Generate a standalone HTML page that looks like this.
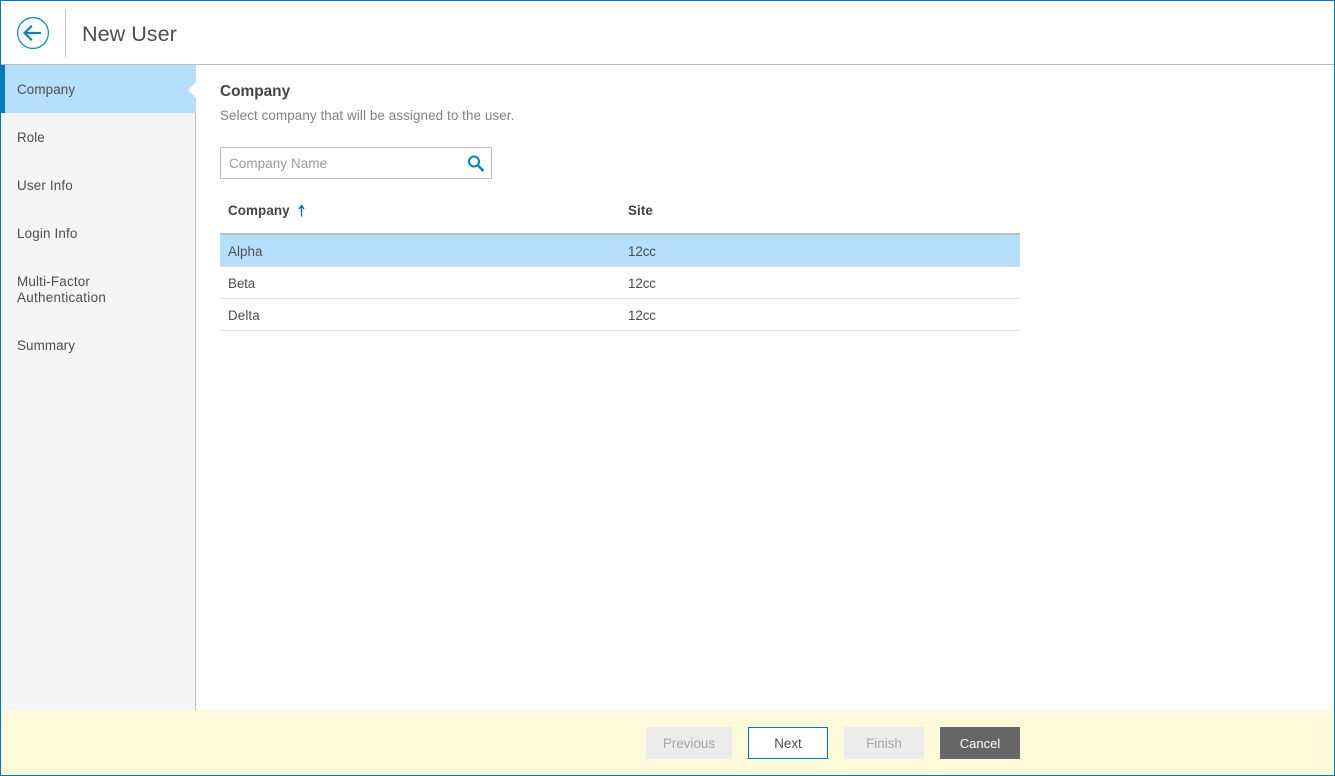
<!DOCTYPE html>
<html>
<head>
<meta charset="utf-8">
<title>New User</title>
<style>
html,body{margin:0;padding:0;background:#fff}
body{width:1335px;height:776px;position:relative;overflow:hidden;font-family:"Liberation Sans",sans-serif;font-size:13.4px;color:#4d4d4d}
.a{position:absolute;white-space:nowrap}
.t{line-height:16px;letter-spacing:.05px}
.b{font-weight:bold;letter-spacing:.1px}
.btn{position:absolute;top:727px;height:32px;line-height:34px;text-align:center;box-sizing:border-box}
</style>
</head>
<body>
<div class="a" style="left:0;top:0;width:1335px;height:776px;box-sizing:border-box;border:1px solid #0079b5;z-index:5"></div>

<!-- header -->
<svg class="a" style="left:16px;top:17px" width="34" height="34" viewBox="0 0 34 34">
<circle cx="17" cy="16" r="15.4" fill="none" stroke="#0a84ba" stroke-width="1.2"/>
<path d="M25 16H8.8M15.8 8.8L8.5 16l7.3 7.2" fill="none" stroke="#0a84ba" stroke-width="2.2"/>
</svg>
<div class="a" style="left:65px;top:9px;width:1px;height:48px;background:#c4c4c4"></div>
<div class="a" style="left:82px;top:21px;font-size:21.6px;line-height:26px;color:#4e4e4e">New User</div>
<div class="a" style="left:1px;top:64px;width:1333px;height:1px;background:#bdbdbd"></div>

<!-- sidebar -->
<div class="a" style="left:1px;top:65px;width:194px;height:646px;background:#f5f5f5"></div>
<div class="a" style="left:195px;top:65px;width:1px;height:646px;background:#bdbdbd"></div>
<div class="a" style="left:1px;top:65px;width:195px;height:48px;background:#b6dffd"></div>
<div class="a" style="left:1px;top:65px;width:4px;height:48px;background:#007cb8"></div>
<svg class="a" style="left:188px;top:82px" width="8" height="16"><path d="M8 0L0 8l8 8z" fill="#fff"/></svg>

<div class="a t" style="left:17px;top:82px;letter-spacing:.12px">Company</div>
<div class="a t" style="left:17px;top:130px">Role</div>
<div class="a t" style="left:17px;top:178px;letter-spacing:.17px">User Info</div>
<div class="a t" style="left:17px;top:226px;letter-spacing:.17px">Login Info</div>
<div class="a t" style="left:17px;top:274px;letter-spacing:.2px">Multi-Factor<br><span style="letter-spacing:.3px">Authentication</span></div>
<div class="a t" style="left:17px;top:338px;letter-spacing:.1px">Summary</div>

<!-- content -->
<div class="a" style="left:220px;top:82px;font-size:15.4px;line-height:20px;font-weight:bold;color:#444">Company</div>
<div class="a t" style="left:220px;top:108px;color:#808080;letter-spacing:.1px">Select company that will be assigned to the user.</div>

<div class="a" style="left:220px;top:147px;width:272px;height:32px;box-sizing:border-box;border:1px solid #bdbdbd;background:#fff"></div>
<div class="a t" style="left:229px;top:156px;color:#999;letter-spacing:.12px">Company Name</div>
<svg class="a" style="left:466px;top:153px" width="20" height="20" viewBox="0 0 20 20">
<circle cx="8" cy="8.5" r="5" fill="none" stroke="#0a7fb8" stroke-width="2"/>
<path d="M11.8 12.3L17.5 18" fill="none" stroke="#0a7fb8" stroke-width="2.4"/>
</svg>

<div class="a t b" style="left:228px;top:203px;color:#444">Company</div>
<svg class="a" style="left:297px;top:204px" width="10" height="14" viewBox="0 0 10 14">
<path d="M4.5 12.5V1.8M2 5l2.5-3.5L7 5" fill="none" stroke="#0f6f9e" stroke-width="1.3"/>
</svg>
<div class="a t b" style="left:628px;top:203px;color:#444">Site</div>

<div class="a" style="left:220px;top:233px;width:800px;height:2px;background:#bdbdbd"></div>
<div class="a" style="left:220px;top:235px;width:800px;height:32px;background:#b6dffd"></div>
<div class="a" style="left:220px;top:266px;width:800px;height:1px;background:#dcdcdc"></div>
<div class="a" style="left:220px;top:298px;width:800px;height:1px;background:#dcdcdc"></div>
<div class="a" style="left:220px;top:330px;width:800px;height:1px;background:#dcdcdc"></div>

<div class="a t" style="left:228px;top:244px">Alpha</div>
<div class="a t" style="left:628px;top:244px;letter-spacing:-.1px">12cc</div>
<div class="a t" style="left:228px;top:276px;letter-spacing:-.1px">Beta</div>
<div class="a t" style="left:628px;top:276px;letter-spacing:-.1px">12cc</div>
<div class="a t" style="left:228px;top:308px;letter-spacing:.1px">Delta</div>
<div class="a t" style="left:628px;top:308px;letter-spacing:-.1px">12cc</div>

<!-- footer -->
<div class="a" style="left:1px;top:711px;width:1333px;height:64px;background:#fffad9"></div>
<div class="btn" style="left:646px;width:86px;background:#ececec;color:#a6a6a6">Previous</div>
<div class="btn" style="left:748px;width:80px;background:#fff;border:1px solid #0079b5;line-height:32px;color:#4d4d4d">Next</div>
<div class="btn" style="left:844px;width:80px;background:#ececec;color:#a6a6a6">Finish</div>
<div class="btn" style="left:940px;width:80px;background:#666;color:#fff;font-size:13px">Cancel</div>
</body>
</html>
